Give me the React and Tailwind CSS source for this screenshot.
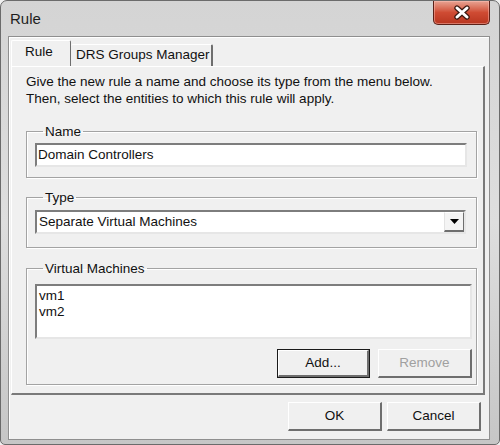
import React from 'react'

const FONT = { fontFamily: '"Liberation Sans", Arial, sans-serif' }

function GroupBox({ label, className = '', children }) {
  return (
    <fieldset
      className={`border border-[#a3a3a3] shadow-[inset_1px_1px_0_#ffffff,1px_1px_0_#ffffff] ${className}`}>
      <legend className="ml-[8px] px-[2px] text-[13.5px] leading-[17px] text-[#111111]">{label}</legend>
      {children}
    </fieldset>
  )
}

function Btn({ children, isDefault, disabled, className = '' }) {
  return (
    <button
      className={`flex items-center justify-center bg-[#f0f0f0] text-[13.5px] ${
        isDefault ? 'border border-[#1a1a1a]' : ''
      } ${disabled ? 'text-[#a0a0a0]' : 'text-[#111111]'} ${className}`}>
      <span className="flex h-full w-full items-center justify-center border-t border-l border-t-white border-l-white border-b-2 border-r-2 border-b-[#6e6e6e] border-r-[#6e6e6e]">
        {children}
      </span>
    </button>
  )
}

function CloseGlyph() {
  return (
    <svg width="20" height="15" viewBox="0 0 20 15">
      <path d="M5 3 L15 12 M15 3 L5 12" stroke="#3a1810" strokeWidth="5.4" strokeLinecap="round" />
      <path d="M5 3 L15 12 M15 3 L5 12" stroke="#ffffff" strokeWidth="3" strokeLinecap="round" />
    </svg>
  )
}

export default function App() {
  return (
    <div className="w-[500px] h-[445px] overflow-hidden bg-[#f0f0f0]" style={FONT}>
      <div className="flex h-full w-full flex-col rounded-t-[7px] rounded-b-[5px] border border-[#6b6b6b] bg-gradient-to-b from-[#d4d4d4] via-[#dedede] to-[#c6c6c6]">
        {/* Title bar */}
        <div className="flex h-[35px] shrink-0 items-start justify-between">
          <span className="ml-[9px] mt-[9px] text-[15px] leading-[18px] text-[#1e1e1e]">Rule</span>
          <button className="mr-[9px] flex h-[24px] w-[57px] items-center justify-center rounded-b-[5px] border border-t-0 border-[#5b2118] bg-gradient-to-b from-[#e7a393] via-[#cf4b33] to-[#b8351f] shadow-[inset_0_0_0_1px_rgba(255,200,190,0.45)]">
            <CloseGlyph />
          </button>
        </div>

        {/* Client area */}
        <div className="ml-[7px] mr-[9px] flex h-[404px] flex-col border border-[#8f8f8f] bg-[#f0f0f0] shadow-[inset_1px_1px_0_#ffffff]">
          {/* Tabs */}
          <div className="ml-[2px] mt-[3px] flex h-[26px] items-end">
            <div className="relative z-10 flex h-[26px] w-[60px] items-center rounded-t-[2px] border-t border-l border-r border-t-white border-l-white border-r-[#6e6e6e] bg-[#f0f0f0] pb-[2px] pl-[13px] text-[13.5px] text-[#111111]">
              Rule
            </div>
            <div className="flex h-[22px] w-[142px] items-center rounded-t-[2px] border-t border-r-2 border-t-white border-r-[#6e6e6e] bg-[#f0f0f0] pl-[5px] text-[13.5px] text-[#111111]">
              DRS Groups Manager
            </div>
          </div>

          {/* Tab panel */}
          <div className="ml-[2px] flex h-[329px] w-[474px] flex-col border-t border-l border-t-white border-l-white border-b-2 border-r-2 border-b-[#7a7a7a] border-r-[#7a7a7a] bg-[#f0f0f0] pl-[14px] pr-[6px]">
            <p className="mt-[6px] text-[13.5px] leading-[17px] text-[#111111]">
              Give the new rule a name and choose its type from the menu below.
              <br />
              Then, select the entities to which this rule will apply.
            </p>

            <GroupBox label="Name" className="mt-[16px] pl-[8px] pr-[9px] pb-[10px]">
              <div className="mt-[3px] flex h-[24px] items-center border-2 border-t-[#7d7d7d] border-l-[#7d7d7d] border-b-[#e6e6e6] border-r-[#e6e6e6] bg-white pl-[1px] text-[13.5px] text-[#111111]">
                Domain Controllers
              </div>
            </GroupBox>

            <GroupBox label="Type" className="mt-[11px] pl-[8px] pr-[10px] pb-[13px]">
              <div className="mt-[4px] flex h-[24px] items-center justify-between border-2 border-t-[#7d7d7d] border-l-[#7d7d7d] border-b-[#e6e6e6] border-r-[#e6e6e6] bg-white pl-[2px] text-[13.5px] text-[#111111]">
                <span>Separate Virtual Machines</span>
                <span className="flex h-[20px] w-[20px] items-center justify-center border-t border-l border-t-white border-l-[#e3e3e3] border-b-2 border-r border-b-[#6e6e6e] border-r-[#6e6e6e] bg-[#f4f4f4]">
                  <svg width="9" height="5" viewBox="0 0 9 5">
                    <path d="M0 0 H9 L4.5 5 Z" fill="#000000" />
                  </svg>
                </span>
              </div>
            </GroupBox>

            <GroupBox label="Virtual Machines" className="mt-[12px] pl-[8px] pr-[4px] pb-[6px]">
              <div className="mt-[7px] h-[55px] border-2 border-t-[#7d7d7d] border-l-[#7d7d7d] border-b-[#e6e6e6] border-r-[#e6e6e6] bg-white pl-[2px] pt-[2px] text-[13.5px] leading-[16px] text-[#111111]">
                <div>vm1</div>
                <div>vm2</div>
              </div>
              <div className="mt-[10px] flex justify-end gap-[8px]">
                <Btn isDefault className="h-[29px] w-[93px]">Add...</Btn>
                <Btn disabled className="h-[29px] w-[94px]">Remove</Btn>
              </div>
            </GroupBox>
          </div>

          {/* Footer */}
          <div className="mr-[8px] mt-[7px] flex justify-end gap-[5px]">
            <Btn className="h-[29px] w-[94px]">OK</Btn>
            <Btn className="h-[29px] w-[94px]">Cancel</Btn>
          </div>
        </div>
      </div>
    </div>
  )
}
